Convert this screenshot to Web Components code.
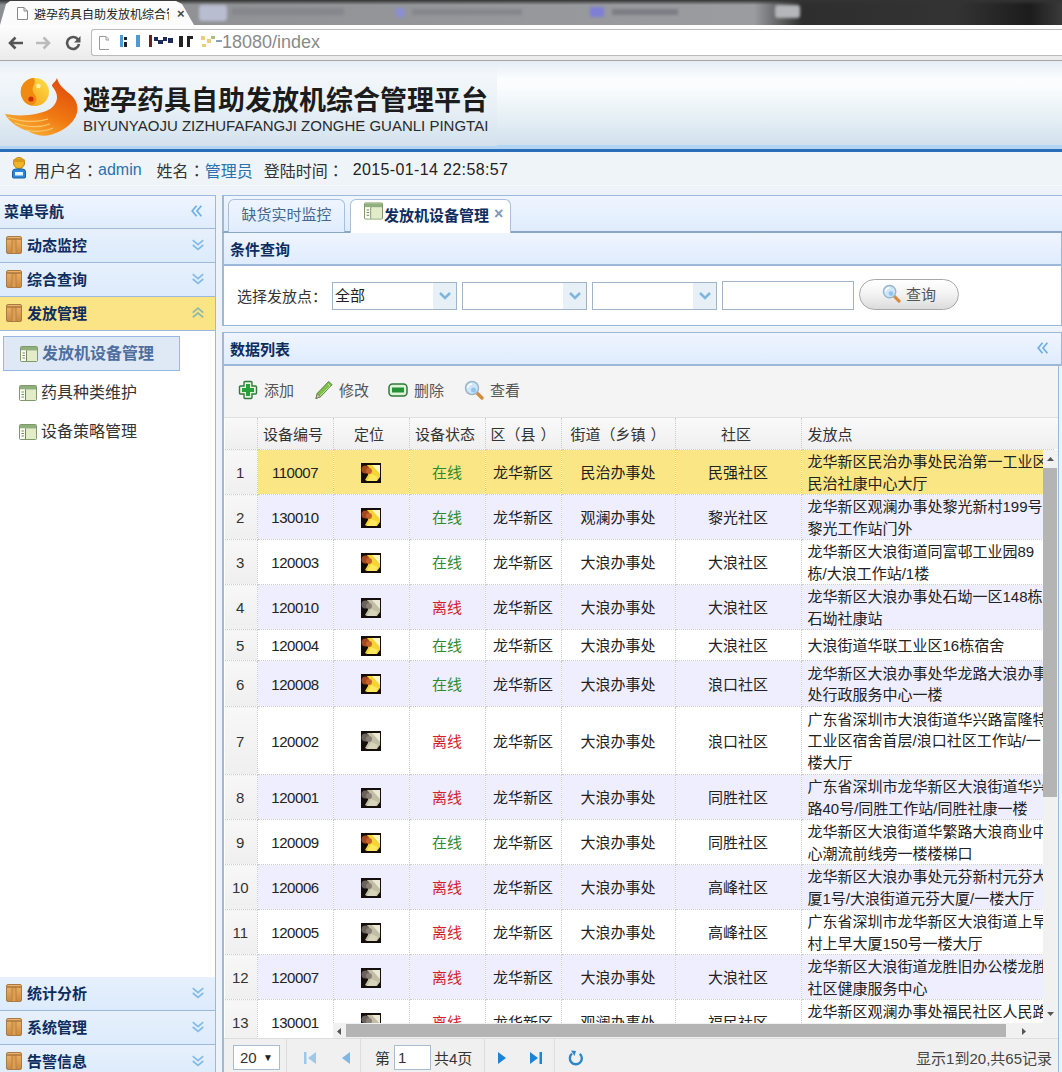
<!DOCTYPE html>
<html lang="zh-CN">
<head>
<meta charset="UTF-8">
<title>避孕药具自助发放机综合管理平台</title>
<style>
  html, body { margin: 0; height: 100%; }
  body {
    width: 1062px; height: 1072px; overflow: hidden;
    display: flex; flex-direction: column;
    background: #edf3f9;
    font: 15px "Liberation Sans", "Noto Sans CJK SC", sans-serif;
    color: #222;
  }
  .main { flex: 1; display: flex; min-height: 0; padding-top: 9px; gap: 6px; }
  .right { flex: 1; min-width: 0; display: flex; flex-direction: column; }
</style>
</head>
<body>
  <browser-chrome></browser-chrome>
  <app-header></app-header>
  <user-bar></user-bar>
  <div class="main">
    <side-nav>
      <nav-row label="动态监控"></nav-row>
      <nav-row label="综合查询"></nav-row>
      <nav-row label="发放管理" open></nav-row>
      <nav-item label="发放机设备管理" selected></nav-item>
      <nav-item label="药具种类维护"></nav-item>
      <nav-item label="设备策略管理"></nav-item>
      <div style="flex:1"></div>
      <nav-row label="统计分析"></nav-row>
      <nav-row label="系统管理"></nav-row>
      <nav-row label="告警信息"></nav-row>
    </side-nav>
    <div class="right">
      <tab-bar></tab-bar>
      <panel-head label="条件查询"></panel-head>
      <search-bar></search-bar>
      <panel-head label="数据列表" collapse style="margin-top:6px"></panel-head>
      <device-grid></device-grid>
    </div>
  </div>

<script>
  // fullwidth punctuation sits centred in the reference, the TC font draws it like that
  const P = (c, pad = '') => `<span style="font-family:'Noto Sans CJK TC',sans-serif;${pad}">${c}</span>`;

  // icons used all over the page
  const ICONS = {
    folder: `<svg viewBox="0 0 16 18"><defs><linearGradient id="fo" x1="0" x2="0" y1="0" y2="1"><stop offset="0" stop-color="#eeb56c"/><stop offset="1" stop-color="#c98a42"/></linearGradient></defs><rect x=".5" y=".5" width="15" height="17" rx="1.5" fill="url(#fo)" stroke="#a97a45"/><rect x="6" y="3" width="4" height="14" fill="#dc9f52"/><path d="M1 3h14" stroke="#9c6a32" stroke-width="1.2"/><path d="M6 3v14M10 3v14" stroke="#b27a38" stroke-width=".8"/></svg>`,
    table: `<svg viewBox="0 0 18 16"><rect x=".5" y=".5" width="17" height="15" rx="1" fill="#eef3dc" stroke="#7f9a68"/><rect x="1" y="1" width="16" height="3.5" fill="#8fb07c"/><rect x="1" y="4.5" width="5" height="10.5" fill="#fbfbf0"/><path d="M6.5 4.5V15" stroke="#6f8a5a"/><path d="M2.500 7h2.400M2.500 9.500h2.400M2.500 12h2.400" stroke="#6f8a5a"/><rect x="7" y="5" width="10" height="10" fill="#e3ecc9"/></svg>`,
    down: `<svg viewBox="0 0 16 16" fill="none" stroke="#83bbe8" stroke-width="2"><path d="M2 2.500l6 5 6-5M2 8l6 5 6-5"/></svg>`,
    up: `<svg viewBox="0 0 16 16" fill="none" stroke="#8db9a8" stroke-width="2"><path d="M2 7.500l6-5 6 5M2 13l6-5 6 5"/></svg>`,
    left: `<svg viewBox="0 0 16 16" fill="none" stroke="#6fb0e6" stroke-width="2"><path d="M7.500 2l-5 6 5 6M13 2l-5 6 5 6"/></svg>`,
    add: `<svg viewBox="0 0 20 20"><path d="M7 1.500h6a1 1 0 0 1 1 1V6h3.500a1 1 0 0 1 1 1v6a1 1 0 0 1-1 1H14v3.500a1 1 0 0 1-1 1H7a1 1 0 0 1-1-1V14H2.500a1 1 0 0 1-1-1V7a1 1 0 0 1 1-1H6V2.500a1 1 0 0 1 1-1z" fill="#e6f5dc" stroke="#2f7a3c" stroke-width="1.400"/><path d="M8 4h4v4h4v4h-4v4H8v-4H4V8h4z" fill="#27a23a"/></svg>`,
    edit: `<svg viewBox="0 0 20 20"><path d="M15.500 1l3.500 3.500L7 17l-5 2 1.500-5.500z" fill="#7fc04c" stroke="#4d7f32"/><path d="M14.500 3.500l2.500 2.500L6 16.500" stroke="#c7e59c" fill="none"/><path d="M2 19l1.500-5 3.500 3z" fill="#d8c79a" stroke="#555" stroke-width=".6"/></svg>`,
    del: `<svg viewBox="0 0 20 14"><rect x="1" y="1" width="18" height="12" rx="3.500" fill="#dff3d7" stroke="#2f7a3c" stroke-width="1.500"/><rect x="4" y="4.500" width="12" height="5" fill="#27913a"/></svg>`,
    search: `<svg viewBox="0 0 20 20"><path d="M12 12l6 6" stroke="#d68b3a" stroke-width="3.200" stroke-linecap="round"/><circle cx="8" cy="8" r="6.500" fill="#cfe6f8" stroke="#9bb6cc" stroke-width="1.500"/><path d="M4 8a4 4 0 0 1 4-4" stroke="#fff" stroke-width="1.500" fill="none"/><circle cx="9.500" cy="10" r="2.500" fill="#8fc4ee"/></svg>`,
    first: `<svg viewBox="0 0 14 14" fill="#9cc8ea"><rect x="1" y="1" width="2.500" height="12"/><path d="M13 1v12L5 7z"/></svg>`,
    prev: `<svg viewBox="0 0 14 14" fill="#7db7e6"><path d="M11 1v12L3 7z"/></svg>`,
    next: `<svg viewBox="0 0 14 14" fill="#1b84d6"><path d="M3 1v12l8-6z"/></svg>`,
    last: `<svg viewBox="0 0 14 14" fill="#1b84d6"><rect x="10.500" y="1" width="2.500" height="12"/><path d="M1 1v12l8-6z"/></svg>`,
    reload: `<svg viewBox="0 0 16 16" fill="none"><path d="M11.800 3.800A6 6 0 1 1 4 3.700" stroke="#2d86c8" stroke-width="2.400"/><path d="M3 .5l5 .5-1.500 5z" fill="#2d86c8"/></svg>`,
    pin: `<svg viewBox="0 0 20 20"><rect width="20" height="20" fill="#140c08"/><path d="M6 2h13v12l-3 4H6l-2-1 3-5 1-5z" fill="#f6d432"/><path d="M11 2h8v9z" fill="#fff6c0"/><path d="M6 18l4-7 7 3-2 4z" fill="#fce75e"/><circle cx="4.500" cy="6.500" r="4" fill="#a4481f"/><circle cx="8" cy="8" r="3" fill="#c4642c"/></svg>`,
    pinOff: `<svg viewBox="0 0 20 20"><rect width="20" height="20" fill="#140f0c"/><path d="M6 2h13v12l-3 4H6l-2-1 3-5 1-5z" fill="#c2bea4"/><path d="M11 2h8v9z" fill="#ebe8d8"/><path d="M6 18l4-7 7 3-2 4z" fill="#d8d4bc"/><circle cx="4.500" cy="6.500" r="4" fill="#6c625c"/><circle cx="8" cy="8" r="3" fill="#8a8076"/></svg>`,
    user: `<svg viewBox="0 0 16 22"><circle cx="8" cy="6" r="5.500" fill="#f0b429" stroke="#b98412"/><rect x="2" y="2" width="12" height="3" rx="1.500" fill="#d89a1c"/><path d="M1.500 15a3 3 0 0 1 3-3h7a3 3 0 0 1 3 3v5a1 1 0 0 1-1 1h-11a1 1 0 0 1-1-1z" fill="#2a86d8" stroke="#1c5fa0"/><rect x="4" y="15" width="8" height="3.500" fill="#e8f3fc"/></svg>`
  };

  class UiIcon extends HTMLElement {
    connectedCallback() {
      const w = this.getAttribute('w') || 16, h = this.getAttribute('h') || 16;
      const root = this.attachShadow({ mode: 'open' });
      root.innerHTML = `<style>:host{display:inline-block;line-height:0;flex:none;width:${w}px;height:${h}px}svg{width:100%;height:100%;display:block}</style>${ICONS[this.getAttribute('name')]}`;
    }
  }
  customElements.define('ui-icon', UiIcon);

  class BrowserChrome extends HTMLElement {
    constructor() {
      super();
      this.attachShadow({ mode: 'open' }).innerHTML = `
        <style>
          :host { display: block; height: 61px; flex: none; overflow: hidden; }
          .strip { height: 25px; display: flex; position: relative; overflow: hidden;
            background: linear-gradient(90deg, #8c8e92 0, #9a9ca0 71%, #2e2e2e 75.500%, #333 90%, #1c1c1c 97%, #3a3a3a 100%); }
          .strip::before { content: ""; position: absolute; left: 0; right: 0; top: 0; height: 5px; background: linear-gradient(#333, rgba(60,60,60,0)); }
          .tab { width: 194px; flex: none; height: 24px; margin-top: 1px; background: #fbfbfb; position: relative;
            clip-path: polygon(0 100%, 6px 3px, 10px 0, 176px 0, 182px 3px, 194px 100%);
            display: flex; align-items: center; padding-left: 17px; box-sizing: border-box; font-size: 12px; color: #222; gap: 6px; }
          .tab b { font-weight: 400; width: 135px; white-space: nowrap; overflow: hidden; flex: none; }
          .tab i { font-style: normal; font-weight: 700; font-size: 13px; color: #444; margin-left: 2px; }
          .blur { position: absolute; filter: blur(1.500px); }
          .tools { height: 36px; box-sizing: border-box; display: flex; align-items: center; padding: 0 0 0 7px;
            background: linear-gradient(#fdfdfd, #ebebeb); border-bottom: 1px solid #a6a6a6; }
          .nav { width: 16px; height: 16px; margin-right: 13px; flex: none; }
          .nav:last-of-type { margin-right: 10px; }
          .omni { flex: 1; height: 27px; background: #fff; border: 1px solid #bbb; border-right: 0; border-radius: 3px 0 0 3px;
            display: flex; align-items: center; padding-left: 7px; box-sizing: border-box; color: #8a8a8a; font-size: 18px; }
          .mask { width: 113px; height: 25px; background: #fff; flex: none; display: block; }
        </style>
        <div class="strip">
          <div class="tab">
            <svg width="11" height="13" viewBox="0 0 11 13" fill="#fff" stroke="#888" style="flex:none"><path d="M.5.500h6.500l3.500 3.500v8.500h-10z"/><path d="M7 .5v3.500h3.500" fill="none"/></svg>
            <b>避孕药具自助发放机综合管理平台</b><i>×</i>
          </div>
          <div class="blur" style="left:199px;top:5px;width:28px;height:16px;background:#b9bdd0;border-radius:3px"></div>
          <div class="blur" style="left:232px;top:8px;width:112px;height:7px;background:#85878c"></div>
          <div class="blur" style="left:396px;top:8px;width:8px;height:9px;background:#8a8ed6"></div>
          <div class="blur" style="left:412px;top:9px;width:110px;height:6px;background:#85878c"></div>
          <div class="blur" style="left:590px;top:7px;width:14px;height:10px;background:#7f7fd6"></div>
          <div class="blur" style="left:612px;top:9px;width:66px;height:6px;background:#7c7e84"></div>
          <div class="blur" style="left:775px;top:5px;width:25px;height:13px;background:#b4b6ba;border-radius:3px"></div>
        </div>
        <div class="tools">
          <svg class="nav" viewBox="0 0 16 16" fill="none" stroke="#555" stroke-width="2.600"><path d="M16 8H3M8.500 2.500L3 8l5.500 5.500"/></svg>
          <svg class="nav" viewBox="0 0 16 16" fill="none" stroke="#bbb" stroke-width="2.600"><path d="M0 8h13M7.500 2.500L13 8l-5.500 5.500"/></svg>
          <svg class="nav" viewBox="0 0 16 16" fill="none"><path d="M13 4.500A6 6 0 1 0 14 9" stroke="#555" stroke-width="2.600"/><path d="M15.500 1v6.500H9z" fill="#555"/></svg>
          <div class="omni">
            <svg width="11" height="14" viewBox="0 0 11 14" fill="#fff" stroke="#999" style="flex:none;margin-right:-1px"><path d="M.5.500h6.500l3.500 3.500v9.500h-10z"/><path d="M7 .5v3.500h3.500" fill="none"/></svg>
            <svg class="mask" viewBox="0 0 113 25" shape-rendering="crispEdges">
              <g fill="#4f9ad4"><rect x="11" y="5" width="3" height="12"/><rect x="27" y="5" width="4" height="12"/></g>
              <g fill="#222"><rect x="15" y="7" width="3" height="3"/><rect x="15" y="12" width="3" height="5"/><rect x="70" y="6" width="4" height="11"/><rect x="78" y="6" width="3" height="11"/><rect x="81" y="6" width="3" height="3"/></g>
              <g fill="#6c1f1f"><rect x="40" y="5" width="3" height="12"/></g>
              <g fill="#1c2a5c"><rect x="45" y="7" width="4" height="4"/><rect x="49" y="10" width="5" height="4"/><rect x="54" y="7" width="4" height="4"/><rect x="59" y="8" width="5" height="5"/></g>
              <g fill="#e8cf78"><rect x="92" y="6" width="4" height="4"/><rect x="98" y="9" width="4" height="4"/><rect x="93" y="14" width="4" height="3"/></g>
              <rect x="102" y="6" width="4" height="3" fill="#a8c07a"/>
              <rect x="107" y="10" width="6" height="2" fill="#8aa0b8"/>
            </svg>
            <span>18080/index</span>
          </div>
        </div>`;
    }
  }
  customElements.define('browser-chrome', BrowserChrome);

  class AppHeader extends HTMLElement {
    constructor() {
      super();
      this.attachShadow({ mode: 'open' }).innerHTML = `
        <style>
          :host { display: block; flex: none; height: 91px; box-sizing: border-box;
            border-bottom: 3px solid #2a6db8;
            background: linear-gradient(#e6edf6 0, #fbfdfe 20%, #fafcfd 30%, #e8f1f6 60%, #d2e0ed 96%, #b3d4f2 96%, #b3d4f2 100%); }
          .logo { width: 497px; height: 85px; display: flex; box-sizing: border-box; padding: 15px 0 0 5px; gap: 5px;
            background: linear-gradient(#e6edf6 0, #eef3f8 10%, #f3f7fa 16%, #e8f0f6 55%, #d3e1ed 100%); }
          svg { flex: none; }
          .txt { padding-top: 6px; }
          h1 { margin: 0; font-size: 27px; line-height: 38px; font-weight: 700; color: #1c1c1c; white-space: nowrap; }
          p { margin: -3px 0 0; font-size: 15px; line-height: 17px; color: #2a2a2a; white-space: nowrap; }
        </style>
        <div class="logo">
          <svg width="73" height="62" viewBox="5 75 73 62">
            <defs>
              <linearGradient id="w" x1=".8" x2=".2" y1="0" y2="1"><stop offset="0" stop-color="#de4a0b"/><stop offset=".55" stop-color="#f07a12"/><stop offset="1" stop-color="#f9b53a"/></linearGradient>
              <linearGradient id="c" x1="1" x2="0" y1="0" y2="1"><stop offset="0" stop-color="#ffe04a"/><stop offset="1" stop-color="#f29a14"/></linearGradient>
            </defs>
            <path d="M57 77c-2 5-5 5-5 8 6 7 8 15-2 23-10 6-30 8-45 5 5 9 15 15 23 17 6 4 16 6 22 4 16-4 30-16 27-30-2-12-17-14-20-27z" fill="url(#w)"/>
            <path d="M8 116c12 5 28 6 40 2M15 122c11 4 24 5 35 1M26 129c9 2 18 2 27-2" stroke="#fcc76a" stroke-width="1.200" fill="none"/>
            <circle cx="35" cy="91" r="14" fill="url(#c)"/>
            <path d="M34 77a14 14 0 0 0-3 27.500c5-1 7-6 4-10.500-3-4-3-7-1-10 1-2 1-5 0-7z" fill="#f08a10"/>
            <circle cx="38.500" cy="85" r="2.300" fill="#fff0a8"/><circle cx="31" cy="98" r="2.600" fill="#cf2c0c"/>
          </svg>
          <div class="txt">
            <h1>避孕药具自助发放机综合管理平台</h1>
            <p>BIYUNYAOJU ZIZHUFAFANGJI ZONGHE GUANLI PINGTAI</p>
          </div>
        </div>`;
    }
  }
  customElements.define('app-header', AppHeader);

  class UserBar extends HTMLElement {
    constructor() {
      super();
      this.attachShadow({ mode: 'open' }).innerHTML = `
        <style>
          :host { display: block; flex: none; height: 34px; background: #eff4f9; border-bottom: 1px solid #f7fafc; font-size: 16px; color: #333; box-sizing: border-box; }
          div { display: flex; align-items: center; height: 34px; box-sizing: border-box; padding: 2px 0 0 11px; white-space: nowrap; }
          ui-icon { margin-right: 7px; margin-top: -5px; }
          a { color: #2a72ab; text-decoration: none; }
          .gap { display: inline-block; }
          .time { color: #222; margin-left: 9px; letter-spacing: .37px; }
        </style>
        <div><ui-icon name="user" w="16" h="22"></ui-icon>用户名${P('：')}<a>admin</a><span class="gap" style="width:15px"></span>姓名${P('：')}<a>管理员</a><span class="gap" style="width:11px"></span>登陆时间${P('：')}<span class="time">2015-01-14 22:58:57</span></div>`;
    }
  }
  customElements.define('user-bar', UserBar);

  class SideNav extends HTMLElement {
    constructor() {
      super();
      this.attachShadow({ mode: 'open' }).innerHTML = `
        <style>
          :host { display: flex; flex-direction: column; flex: none; width: 216px; box-sizing: border-box; margin-bottom: -7px;
            background: #fff; border-right: 1px solid #9db9d9; border-top: 1px solid #9db9d9; }
          .head { height: 33px; flex: none; box-sizing: border-box; display: flex; align-items: center; justify-content: space-between;
            padding: 0 11px 3px 4px; font-weight: 700; color: #0e2d5f; border-bottom: 1px solid #9db9d9;
            background: linear-gradient(#eff5ff, #dfecfd); }
        </style>
        <div class="head"><span>菜单导航</span><ui-icon name="left" w="14" h="14"></ui-icon></div>
        <slot></slot>`;
    }
  }
  customElements.define('side-nav', SideNav);

  class NavRow extends HTMLElement {
    constructor() {
      super();
      const open = this.hasAttribute('open');
      this.attachShadow({ mode: 'open' }).innerHTML = `
        <style>
          :host { display: flex; flex: none; align-items: center; height: 34px; box-sizing: border-box; padding: 0 10px 2px 6px;
            border-bottom: 1px solid #9db9d9; font-weight: 700; color: #0e2d5f;
            background: ${open ? '#fbe485' : 'linear-gradient(#e7f0fc, #dcebfc)'}; }
          span { flex: 1; margin-left: 5px; }
        </style>
        <ui-icon name="folder" w="16" h="18"></ui-icon><span>${this.getAttribute('label')}</span>
        <ui-icon name="${open ? 'up' : 'down'}" w="14" h="14"></ui-icon>`;
    }
  }
  customElements.define('nav-row', NavRow);

  class NavItem extends HTMLElement {
    constructor() {
      super();
      const sel = this.hasAttribute('selected');
      this.attachShadow({ mode: 'open' }).innerHTML = `
        <style>
          :host { display: flex; flex: none; align-items: center; box-sizing: border-box; font-size: 16px;
            width: 177px; height: ${sel ? 35 : 39}px; margin: ${sel ? '5px 0 2px 3px' : '0 0 0 3px'}; padding: 0 0 3px 16px; gap: 4px;
            ${sel ? 'background:#dfe9f6;border:1px solid #95b8e7;font-weight:700;color:#4e6f9e;' : 'color:#333;'} }
          ui-icon { margin-top: 4px; }
        </style>
        <ui-icon name="table" w="18" h="16"></ui-icon><span>${this.getAttribute('label')}</span>`;
    }
  }
  customElements.define('nav-item', NavItem);

  class TabBar extends HTMLElement {
    constructor() {
      super();
      this.attachShadow({ mode: 'open' }).innerHTML = `
        <style>
          :host { display: flex; flex: none; height: 38px; box-sizing: border-box; padding: 3px 0 0 4px; gap: 5px;
            background: linear-gradient(#eff5ff, #dfecfd); border: 1px solid #9db9d9; border-width: 1px 0 2px 2px; border-bottom-color: #8ba6c4; }
          .t { height: 33px; box-sizing: border-box; border: 1px solid #a9c0da; border-bottom: 0; border-radius: 6px 6px 0 0;
            display: flex; align-items: center; white-space: nowrap; padding-bottom: 5px; }
          .a { width: 117px; justify-content: center; color: #44668f; background: linear-gradient(#eff5ff, #e0ecfd); }
          .b { width: 161px; padding-left: 13px; background: #fff; font-weight: 700; color: #0e2d5f; height: 34px; }
          .b ui-icon { margin: -6px 1px 0 0; }
          i { font-style: normal; color: #7f98b5; margin-left: 5px; font-size: 16px; }
        </style>
        <div class="t a">缺货实时监控</div>
        <div class="t b"><ui-icon name="table" w="19" h="18"></ui-icon>发放机设备管理<i>×</i></div>`;
    }
  }
  customElements.define('tab-bar', TabBar);

  class PanelHead extends HTMLElement {
    constructor() {
      super();
      const c = this.hasAttribute('collapse');
      this.attachShadow({ mode: 'open' }).innerHTML = `
        <style>
          :host { display: flex; flex: none; align-items: center; justify-content: space-between; height: ${c ? 34 : 33}px; box-sizing: border-box;
            padding: 0 11px 1px 6px; border: 1px solid #9db9d9; border-left: 2px solid #9db9d9; border-bottom: 2px solid #9db9d9; border-top-width: ${c ? 1 : 0}px;
            font-weight: 700; color: #0e2d5f; background: linear-gradient(#eff5ff, #dfecfd); }
        </style>
        <span>${this.getAttribute('label')}</span>${c ? '<ui-icon name="left" w="14" h="14"></ui-icon>' : ''}`;
    }
  }
  customElements.define('panel-head', PanelHead);

  class ComboBox extends HTMLElement {
    constructor() {
      super();
      this.attachShadow({ mode: 'open' }).innerHTML = `
        <style>
          :host { display: flex; width: 125px; height: 28px; box-sizing: border-box; border: 1px solid #9fb4c8; background: #fff; flex: none; }
          span { flex: 1; padding-left: 2px; line-height: 25px; }
          b { width: 23px; background: #e7eff7; display: flex; align-items: center; justify-content: center; }
        </style>
        <span>${this.getAttribute('value') || ''}</span>
        <b><svg width="12" height="8" viewBox="0 0 12 8" fill="none" stroke="#7fb6dc" stroke-width="2.500"><path d="M1 1l5 5 5-5"/></svg></b>`;
    }
  }
  customElements.define('combo-box', ComboBox);

  class SearchBar extends HTMLElement {
    constructor() {
      super();
      this.attachShadow({ mode: 'open' }).innerHTML = `
        <style>
          :host { display: flex; flex: none; align-items: center; height: 60px; box-sizing: border-box; background: #fff; gap: 5px;
            padding: 0 0 0 13px; border: 1px solid #9db9d9; border-width: 0 1px 1px 2px; }
          label { width: 90px; color: #333; white-space: nowrap; }
          .inp { width: 132px; height: 29px; box-sizing: border-box; border: 1px solid #9fb4c8; background: #fff; }
          .btn { width: 100px; height: 31px; margin: -3px 0 0 0; box-sizing: border-box; border: 1px solid #a8a8a8; border-radius: 16px; padding-bottom: 1px;
            background: linear-gradient(#fff, #f4f4f4 45%, #dcdcdc); display: flex; align-items: center; justify-content: center; gap: 5px; color: #555; }
        </style>
        <label>选择发放点${P('：')}</label>
        <combo-box value="全部"></combo-box><combo-box></combo-box><combo-box></combo-box>
        <div class="inp"></div>
        <div class="btn"><ui-icon name="search" w="19" h="19"></ui-icon>查询</div>`;
    }
  }
  customElements.define('search-bar', SearchBar);

  const ROWS = [
    ['110007', 1, '民治办事处', '民强社区', '龙华新区民治办事处民治第一工业区\n民治社康中心大厅', 45],
    ['130010', 1, '观澜办事处', '黎光社区', '龙华新区观澜办事处黎光新村199号\n黎光工作站门外', 45],
    ['120003', 1, '大浪办事处', '大浪社区', '龙华新区大浪街道同富邨工业园89\n栋/大浪工作站/1楼', 45],
    ['120010', 0, '大浪办事处', '大浪社区', '龙华新区大浪办事处石坳一区148栋\n石坳社康站', 45],
    ['120004', 1, '大浪办事处', '大浪社区', '大浪街道华联工业区16栋宿舍', 31],
    ['120008', 1, '大浪办事处', '浪口社区', '龙华新区大浪办事处华龙路大浪办事\n处行政服务中心一楼', 46],
    ['120002', 0, '大浪办事处', '浪口社区', '广东省深圳市大浪街道华兴路富隆特\n工业区宿舍首层/浪口社区工作站/一\n楼大厅', 68],
    ['120001', 0, '大浪办事处', '同胜社区', '广东省深圳市龙华新区大浪街道华兴\n路40号/同胜工作站/同胜社康一楼', 45],
    ['120009', 1, '大浪办事处', '同胜社区', '龙华新区大浪街道华繁路大浪商业中\n心潮流前线旁一楼楼梯口', 45],
    ['120006', 0, '大浪办事处', '高峰社区', '龙华新区大浪办事处元芬新村元芬大\n厦1号/大浪街道元芬大厦/一楼大厅', 45],
    ['120005', 0, '大浪办事处', '高峰社区', '广东省深圳市龙华新区大浪街道上早\n村上早大厦150号一楼大厅', 45],
    ['120007', 0, '大浪办事处', '大浪社区', '龙华新区大浪街道龙胜旧办公楼龙胜\n社区健康服务中心', 45],
    ['130001', 0, '观澜办事处', '福民社区', '龙华新区观澜办事处福民社区人民路\n福民社区工作站', 45]
  ];

  class DeviceGrid extends HTMLElement {
    constructor() {
      super();
      const rows = ROWS.map((r, i) => `
        <tr class="${i === 0 ? 'sel' : i % 2 ? 'alt' : ''}" style="height:${r[5]}px">
          <td class="n">${i + 1}</td><td class="id">${r[0]}</td>
          <td><ui-icon name="${r[1] ? 'pin' : 'pinOff'}" w="20" h="20"></ui-icon></td>
          <td class="${r[1] ? 'on' : 'off'}">${r[1] ? '在线' : '离线'}</td>
          <td>龙华新区</td><td>${r[2]}</td><td>${r[3]}</td><td class="addr">${r[4]}</td>
        </tr>`).join('');
      this.attachShadow({ mode: 'open' }).innerHTML = `
        <style>
          :host { flex: 1; min-height: 0; display: flex; flex-direction: column; margin-right: 3px; background: #f4f4f4;
            border-left: 2px solid #9db9d9; border-right: 1px solid #9db9d9; }
          .bar { height: 51px; flex: none; display: flex; align-items: center; padding: 0 0 4px 14px; box-sizing: border-box; color: #555; }
          .bar span { display: flex; align-items: center; gap: 6px; }
          .wrap { flex: 1; min-height: 0; position: relative; overflow: hidden; background: #fff; border-top: 1px solid #e0e0e0; padding-left: 1px; }
          table { border-collapse: collapse; table-layout: fixed; width: 828px; }
          th { height: 31px; padding: 0 4px 0 0; font-weight: 400; color: #333; background: linear-gradient(#f9f9f9, #efefef); border-right: 1px dotted #ccc; border-bottom: 1px dotted #ccc; }
          th.w { padding: 0; }
          td { padding: 2px 0 0; text-align: center; color: #222; border-right: 1px dotted #ccc; border-bottom: 1px dotted #ccc; white-space: nowrap; overflow: hidden; line-height: 22px; }
          td.n { background: linear-gradient(#f7f7f7, #efefef); color: #333; padding-right: 1px; }
          td.id { letter-spacing: -.45px; }
          tr.alt td { background: #eeeeff; }
          tr.sel td { background: #fbe685; }
          tr.alt td.n, tr.sel td.n { background: linear-gradient(#f7f7f7, #efefef); }
          td.addr { text-align: left; padding: 1px 0 0 6px; white-space: pre; line-height: 21.500px; }
          th.addr { text-align: left; padding-left: 6px; }
          td ui-icon { vertical-align: middle; margin-top: -3px; }
          .on { color: #2f8a2f; } .off { color: #d2222e; }
          .fill { position: absolute; right: 0; top: 0; width: 5px; height: 31px; background: linear-gradient(#f9f9f9, #efefef); }
          .vs { position: absolute; right: 0; top: 32px; bottom: 15px; width: 15px; background: #f1f1f1; }
          .vs .th { position: absolute; left: 0; right: 1px; top: 18px; height: 329px; background: #b4b4b4; }
          .vs svg { position: absolute; left: 3px; }
          .hs { position: absolute; left: 109px; right: 0; bottom: 0; height: 15px; background: #f1f1f1; }
          .hs .th { position: absolute; left: 13px; width: 660px; top: 1px; bottom: 1px; background: #b4b4b4; }
          .hs svg { position: absolute; top: 4px; }
          .pager { height: 34px; flex: none; box-sizing: border-box; display: flex; align-items: center; overflow: hidden; background: #f0f0f0; border-top: 1px solid #ddd; padding: 4px 0 0 9px; white-space: nowrap; color: #333; }
          .sz { width: 47px; height: 25px; box-sizing: border-box; background: #fff; border: 1px solid #a9bdd0; display: flex; align-items: center; justify-content: space-between; padding: 0 6px; margin-right: 6px; }
          .sz i { font-style: normal; font-size: 10px; color: #222; }
          .sep { width: 1px; height: 38px; background: #ddd; flex: none; }
          .pg { width: 37px; height: 25px; box-sizing: border-box; background: #fff; border: 1px solid #a9bdd0; padding-left: 3px; line-height: 23px; margin: 0 3px 0 4px; }
          .info { margin-left: auto; margin-right: 6px; color: #444; }
        </style>
        <div class="bar">
          <span style="width:76px"><ui-icon name="add" w="20" h="20"></ui-icon>添加</span>
          <span style="width:74px"><ui-icon name="edit" w="19" h="20"></ui-icon>修改</span>
          <span style="width:76px"><ui-icon name="del" w="20" h="14"></ui-icon>删除</span>
          <span><ui-icon name="search" w="20" h="20"></ui-icon>查看</span>
        </div>
        <div class="wrap">
          <table>
            <colgroup><col width="32"><col width="76"><col width="76"><col width="76"><col width="76"><col width="114"><col width="126"><col width="252"></colgroup>
            <tr><th></th><th>设备编号</th><th>定位</th><th>设备状态</th><th class="w">区${P('（')}县${P('）', 'padding-left:5px')}</th><th class="w">街道${P('（')}乡镇${P('）', 'padding-left:5px')}</th><th>社区</th><th class="addr">发放点</th></tr>
            ${rows}
          </table>
          <div class="fill"></div>
          <div class="vs">
            <svg width="9" height="6" viewBox="0 0 9 6" fill="#555" style="top:6px"><path d="M4.500 1L8 5H1z"/></svg>
            <div class="th"></div>
            <svg width="9" height="6" viewBox="0 0 9 6" fill="#555" style="bottom:6px"><path d="M4.500 5L8 1H1z"/></svg>
          </div>
          <div class="hs">
            <svg width="6" height="9" viewBox="0 0 6 9" fill="#555" style="left:3px"><path d="M1 4.500L5 1v7z"/></svg>
            <div class="th"></div>
            <svg width="6" height="9" viewBox="0 0 6 9" fill="#555" style="left:688px"><path d="M5 4.500L1 1v7z"/></svg>
          </div>
        </div>
        <div class="pager">
          <div class="sz">20<i>▼</i></div><div class="sep"></div>
          <ui-icon name="first" w="14" h="14" style="margin-left:16px"></ui-icon>
          <ui-icon name="prev" w="14" h="14" style="margin:0 7px 0 22px"></ui-icon><div class="sep"></div>
          <span style="margin-left:14px">第</span><div class="pg">1</div><span>共4页</span>
          <div class="sep" style="margin-left:12px"></div>
          <ui-icon name="next" w="14" h="14" style="margin-left:10px"></ui-icon>
          <ui-icon name="last" w="14" h="14" style="margin:0 11px 0 20px"></ui-icon><div class="sep"></div>
          <ui-icon name="reload" w="16" h="16" style="margin-left:13px"></ui-icon>
          <span class="info">显示1到20,共65记录</span>
        </div>`;
    }
  }
  customElements.define('device-grid', DeviceGrid);
</script>
</body>
</html>
